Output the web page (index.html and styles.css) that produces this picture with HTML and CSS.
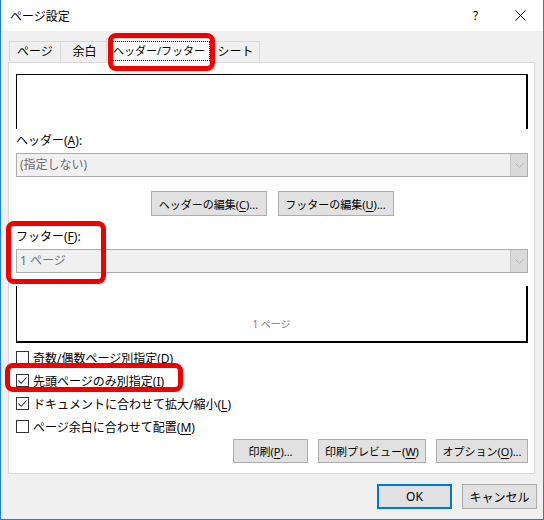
FILE: index.html
```html
<!DOCTYPE html>
<html lang="ja">
<head>
    <meta charset="UTF-8">
    <title>ページ設定</title>
    <link rel="stylesheet" href="styles.css">
</head>
<body>
    <section class="dialog">
        <div class="titlebar">
            <span class="title">ページ設定</span>
            <span class="help">?</span>
            <span class="close">
                <svg width="11" height="11" viewBox="0 0 11 11"><path d="M0.5 0.5L10.5 10.5M10.5 0.5L0.5 10.5" stroke="#000" stroke-width="1" fill="none"/></svg>
            </span>
        </div>
        <div class="body">
            <div class="tabs">
                <div class="tab tab-page">ページ</div>
                <div class="tab tab-margin">余白</div>
                <div class="tab active"><span class="focus">ヘッダー/フッター</span></div>
                <div class="tab tab-sheet">シート</div>
            </div>
            <div class="panel">
                <div class="preview header-preview"></div>
                <div class="label">ヘッダー(<u>A</u>):</div>
                <div class="select">
                    <span class="value">(指定しない)</span>
                    <span class="arrow"><svg width="9" height="5" viewBox="0 0 9 5"><path d="M0.5 0.5L4.5 4.5L8.5 0.5" stroke="#b4b4b4" fill="none"/></svg></span>
                </div>
                <div class="edit-row">
                    <button class="btn btn-edit">ヘッダーの編集(<u>C</u>)...</button>
                    <button class="btn btn-edit">フッターの編集(<u>U</u>)...</button>
                </div>
                <div class="label label-footer">フッター(<u>F</u>):</div>
                <div class="select">
                    <span class="value">1 ページ</span>
                    <span class="arrow"><svg width="9" height="5" viewBox="0 0 9 5"><path d="M0.5 0.5L4.5 4.5L8.5 0.5" stroke="#b4b4b4" fill="none"/></svg></span>
                </div>
                <div class="preview footer-preview"><span>1 ページ</span></div>
                <ul class="checks">
                    <li><span class="box"></span><span>奇数/偶数ページ別指定(<u>D</u>)</span></li>
                    <li><span class="box checked"><svg width="11" height="11" viewBox="0 0 11 11"><path d="M1.5 5.5L4.2 8.3L9.5 2.5" stroke="#333" stroke-width="1.1" fill="none"/></svg></span><span>先頭ページのみ別指定(<u>I</u>)</span></li>
                    <li><span class="box checked"><svg width="11" height="11" viewBox="0 0 11 11"><path d="M1.5 5.5L4.2 8.3L9.5 2.5" stroke="#333" stroke-width="1.1" fill="none"/></svg></span><span>ドキュメントに合わせて拡大/縮小(<u>L</u>)</span></li>
                    <li><span class="box"></span><span>ページ余白に合わせて配置(<u>M</u>)</span></li>
                </ul>
                <div class="panel-buttons">
                    <button class="btn btn-print">印刷(<u>P</u>)...</button>
                    <button class="btn btn-preview">印刷プレビュー(<u>W</u>)</button>
                    <button class="btn btn-option">オプション(<u>O</u>)...</button>
                </div>
            </div>
            <div class="dialog-buttons">
                <button class="btn btn-main ok">OK</button>
                <button class="btn btn-main">キャンセル</button>
            </div>
        </div>
        <div class="mark mark-tab"></div>
        <div class="mark mark-footer"></div>
        <div class="mark mark-check"></div>
    </section>
</body>
</html>
```

FILE: styles.css
```css
*{margin: 0;padding: 0;box-sizing: border-box;list-style: none;}
body{font-family: "Noto Sans", "Noto Sans CJK JP", sans-serif;font-size: 11px;color: #000;}
u{text-decoration: underline;text-underline-offset: 2px;}

.dialog{position: relative;width: 544px;height: 520px;background: #f0f0f0;border: 1px solid #1883d7;border-top: 0;}
.titlebar{height: 31px;background: #fff;display: flex;align-items: center;padding-left: 9px;font-size: 12px;}
.title{flex: 1;}
.help{width: 45px;text-align: center;}
.close{width: 45px;display: flex;justify-content: center;}

.body{padding: 10px 8px 0 7px;}

.tabs{display: flex;height: 21px;padding-left: 1px;}
.tab{height: 21px;line-height: 20px;border: 1px solid #d9d9d9;border-bottom: 0;margin-right: -1px;background: #f0f0f0;text-align: center;font-size: 12px;}
.tab-page{width: 52px;}
.tab-margin{width: 49px;}
.tab-sheet{width: 49px;}
.tab.active{position: relative;z-index: 1;width: 106px;height: 25px;margin: -3px -1px -1px -2px;background: #fff;display: flex;align-items: center;justify-content: center;font-size: 11px;}
.focus{border: 1px dotted #000;line-height: 18px;padding: 0 4px;white-space: nowrap;}

.panel{background: #fff;border: 1px solid #d9d9d9;padding: 11px 6px 10px 7px;}
.preview{border: 0 solid #000;}
.header-preview{height: 55px;border-top-width: 1px;border-left-width: 1px;border-right-width: 2px;}
.footer-preview{height: 57px;margin-top: 13px;border-left-width: 1px;border-right-width: 2px;border-bottom-width: 2px;display: flex;align-items: flex-end;justify-content: center;padding-bottom: 10px;font-size: 10px;color: #7a7a7a;}

.label{line-height: 20px;margin-top: 2px;font-size: 12px;}
.label-footer{margin-top: 11px;}

.select{display: flex;height: 24px;margin-top: 2px;border: 1px solid #adadad;background: #f0f0f0;color: #6d6d6d;font-size: 12px;}
.select .value{flex: 1;line-height: 22px;padding-left: 3px;}
.select .arrow{width: 17px;background: #dadada;border-left: 1px solid #c6c6c6;display: flex;align-items: center;justify-content: center;}

.btn{font: inherit;color: #000;height: 25px;background: #e1e1e1;border: 1px solid #adadad;padding: 0;white-space: nowrap;}
.edit-row{display: flex;justify-content: center;gap: 11px;margin-top: 14px;}
.btn-edit{width: 116px;}

.checks{margin-top: 3px;}
.checks li{height: 23px;display: flex;align-items: center;gap: 4px;font-size: 12px;}
.box{width: 13px;height: 13px;border: 1px solid #333;background: #fff;display: flex;align-items: center;justify-content: center;}

.panel-buttons{display: flex;justify-content: flex-end;gap: 10px;margin-top: 1px;}
.panel-buttons .btn{height: 24px;}
.btn-print{width: 75px;}
.btn-preview{width: 108px;}
.btn-option{width: 92px;}

.dialog-buttons{display: flex;justify-content: flex-end;gap: 10px;margin-top: 10px;margin-right: -2px;}
.btn-main{width: 75px;font-size: 12px;}
.ok{border-color: #0078d7;box-shadow: inset 0 0 0 1px #0078d7;}

.mark{position: absolute;z-index: 10;border: 5px solid #f00000;border-radius: 8px;}
.mark-tab{left: 107px;top: 33px;width: 107px;height: 38px;}
.mark-footer{left: 5px;top: 221px;width: 100px;height: 63px;}
.mark-check{left: 4px;top: 363px;width: 178px;height: 29px;}
```
